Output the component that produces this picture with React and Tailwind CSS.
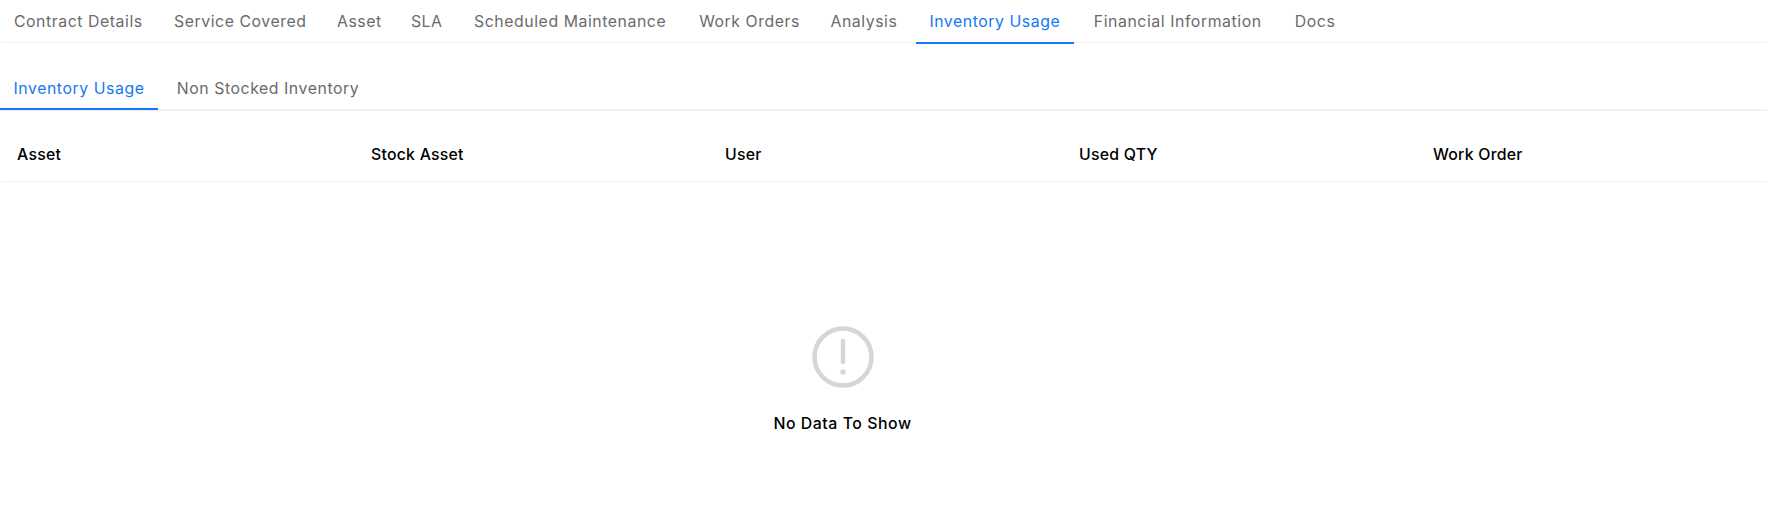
const TABS = [
  { label: 'Contract Details', width: 'w-[154.6px]' },
  { label: 'Service Covered', width: 'w-[156.5px]' },
  { label: 'Asset', width: 'w-[69px]' },
  { label: 'SLA', width: 'w-[53px]' },
  { label: 'Scheduled Maintenance', width: 'w-[221px]' },
  { label: 'Work Orders', width: 'w-[125px]' },
  { label: 'Analysis', width: 'w-[91px]' },
  { label: 'Inventory Usage', width: 'w-[158px]', active: true },
  { label: 'Financial Information', width: 'w-[195px]' },
  { label: 'Docs', width: 'w-[67px]' },
]
const SUB_TABS = [
  { label: 'Inventory Usage', width: 'w-[158px]', active: true },
  { label: 'Non Stocked Inventory', width: 'w-[206px]' },
]
const COLUMNS = ['Asset', 'Stock Asset', 'User', 'Used QTY', 'Work Order']

function Tab({ label, width, active, className }) {
  return (
    <div className={`flex items-center justify-center whitespace-nowrap ${width} ${active ? 'border-[#1677f5] text-[#1677f5]' : 'border-transparent text-[#6b6b6b]'} ${className}`}>
      {label}
    </div>
  )
}

export default function App() {
  return (
    <div className="w-full h-[506px] bg-white text-[15.84px] tracking-[0.035em] overflow-hidden font-['Inter','Noto_Sans',sans-serif]">
      <div className="flex h-[43px] gap-[6.4px] mr-[4px] ml-[1px] border-b-[1.5px] border-[#f1f1f1]">
        {TABS.map(t => (
          <Tab key={t.label} {...t} className="pt-[3px] border-b-[2.5px] -mb-[1.5px]" />
        ))}
      </div>

      <div className="flex h-[68px] pt-[26px] gap-[7px] mr-[4px] border-b-2 border-[#f1f1f1]">
        {SUB_TABS.map(t => (
          <Tab key={t.label} {...t} className="border-b-[2.5px] -mb-[1px]" />
        ))}
      </div>

      <div className="grid grid-cols-[354px_354px_354px_354px_1fr] h-[71px] pt-[18px] mr-[4px] ml-[1px] border-b-[1.5px] border-[#f1f1f1] items-center font-medium tracking-[0.015em] text-black">
        {COLUMNS.map(c => (
          <div key={c} className="pl-[16px]">{c}</div>
        ))}
      </div>

      <div className="flex flex-col items-center pt-[144px] pr-[86px]">
        <svg width="62" height="62" viewBox="0 0 62 62" fill="none">
          <circle cx="31" cy="31" r="28.5" stroke="#d6d6d6" strokeWidth="4.5" />
          <line x1="31" y1="15" x2="31" y2="36" stroke="#d6d6d6" strokeWidth="4.5" strokeLinecap="round" />
          <circle cx="31" cy="46" r="2.8" fill="#d6d6d6" />
        </svg>
        <div className="mt-[24px] font-medium text-black">No Data To Show</div>
      </div>
    </div>
  )
}
